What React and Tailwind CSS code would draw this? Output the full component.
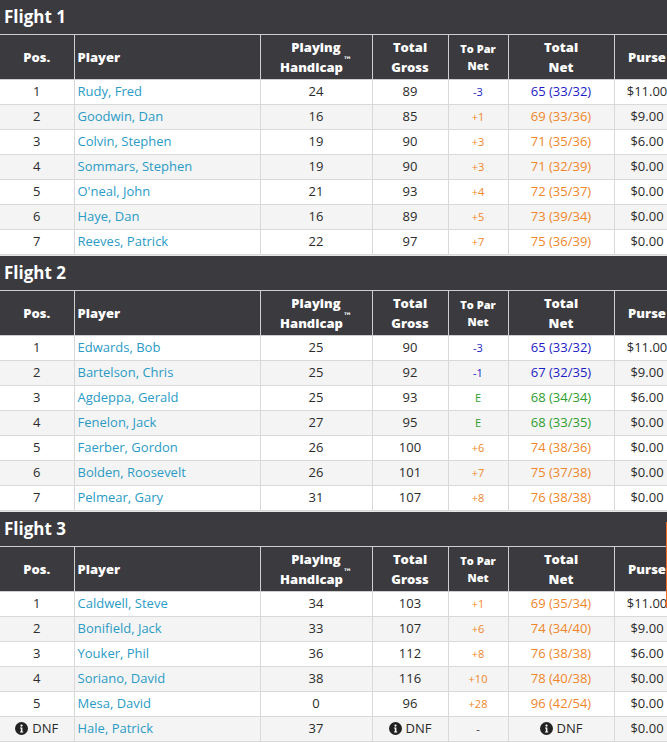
import React from 'react';

const flights = [
  {
    name: 'Flight 1',
    rows: [
      { pos: '1', player: 'Rudy, Fred', hcp: 24, gross: 89, par: '-3', net: '65 (33/32)', purse: '$11.00' },
      { pos: '2', player: 'Goodwin, Dan', hcp: 16, gross: 85, par: '+1', net: '69 (33/36)', purse: '$9.00' },
      { pos: '3', player: 'Colvin, Stephen', hcp: 19, gross: 90, par: '+3', net: '71 (35/36)', purse: '$6.00' },
      { pos: '4', player: 'Sommars, Stephen', hcp: 19, gross: 90, par: '+3', net: '71 (32/39)', purse: '$0.00' },
      { pos: '5', player: "O'neal, John", hcp: 21, gross: 93, par: '+4', net: '72 (35/37)', purse: '$0.00' },
      { pos: '6', player: 'Haye, Dan', hcp: 16, gross: 89, par: '+5', net: '73 (39/34)', purse: '$0.00' },
      { pos: '7', player: 'Reeves, Patrick', hcp: 22, gross: 97, par: '+7', net: '75 (36/39)', purse: '$0.00' },
    ],
  },
  {
    name: 'Flight 2',
    rows: [
      { pos: '1', player: 'Edwards, Bob', hcp: 25, gross: 90, par: '-3', net: '65 (33/32)', purse: '$11.00' },
      { pos: '2', player: 'Bartelson, Chris', hcp: 25, gross: 92, par: '-1', net: '67 (32/35)', purse: '$9.00' },
      { pos: '3', player: 'Agdeppa, Gerald', hcp: 25, gross: 93, par: 'E', net: '68 (34/34)', purse: '$6.00' },
      { pos: '4', player: 'Fenelon, Jack', hcp: 27, gross: 95, par: 'E', net: '68 (33/35)', purse: '$0.00' },
      { pos: '5', player: 'Faerber, Gordon', hcp: 26, gross: 100, par: '+6', net: '74 (38/36)', purse: '$0.00' },
      { pos: '6', player: 'Bolden, Roosevelt', hcp: 26, gross: 101, par: '+7', net: '75 (37/38)', purse: '$0.00' },
      { pos: '7', player: 'Pelmear, Gary', hcp: 31, gross: 107, par: '+8', net: '76 (38/38)', purse: '$0.00' },
    ],
  },
  {
    name: 'Flight 3',
    rows: [
      { pos: '1', player: 'Caldwell, Steve', hcp: 34, gross: 103, par: '+1', net: '69 (35/34)', purse: '$11.00' },
      { pos: '2', player: 'Bonifield, Jack', hcp: 33, gross: 107, par: '+6', net: '74 (34/40)', purse: '$9.00' },
      { pos: '3', player: 'Youker, Phil', hcp: 36, gross: 112, par: '+8', net: '76 (38/38)', purse: '$6.00' },
      { pos: '4', player: 'Soriano, David', hcp: 38, gross: 116, par: '+10', net: '78 (40/38)', purse: '$0.00' },
      { pos: '5', player: 'Mesa, David', hcp: 0, gross: 96, par: '+28', net: '96 (42/54)', purse: '$0.00' },
      { pos: 'DNF', player: 'Hale, Patrick', hcp: 37, gross: 'DNF', par: '-', net: 'DNF', purse: '$0.00' },
    ],
  },
];

const InfoDot = () => (
  <svg width="13" height="13" viewBox="0 0 16 16" className="inline-block align-[-2px] mr-1">
    <circle cx="8" cy="8" r="8" fill="#222" />
    <circle cx="8" cy="4.4" r="1.4" fill="#fff" />
    <path d="M6.2 6.8h2.9v4.9h1v1.3H6.2v-1.3h1v-3.6h-1z" fill="#fff" />
  </svg>
);

const scoreColor = (par) => {
  if (par === 'E') return 'text-[#2e9e2e]';
  if (par.startsWith('-') && par.length > 1) return 'text-[#1c1cc4]';
  if (par.startsWith('+')) return 'text-[#f0862a]';
  return 'text-[#333]';
};

const cell = 'border border-[#d9d9d9] h-[25px] p-0 text-center';
const head = 'border border-[#cfcfcf] p-0 text-center font-extrabold text-white';

const FlightTable = ({ flight }) => (
  <div className="mb-px">
    <div className="h-[34px] bg-[#3b3a3f] text-white font-bold text-[17px] leading-[34px] pl-1">
      {flight.name}
    </div>
    <table className="table-fixed border-collapse w-[680px] text-[13px] text-[#2b2b2b]">
      <colgroup>
        <col className="w-[74px]" />
        <col className="w-[186px]" />
        <col className="w-[112px]" />
        <col className="w-[76px]" />
        <col className="w-[60px]" />
        <col className="w-[106px]" />
        <col className="w-[66px]" />
      </colgroup>
      <thead>
        <tr className="bg-[#3b3a3f] h-[45px] leading-[20px]">
          <th className={`${head} border-l-0`}>Pos.</th>
          <th className={`${head} text-left pl-[3px]`}>Player</th>
          <th className={head}>
            Playing<br />Handicap
            <sup
              className="text-[9px] align-[5px] font-bold"
              style={{ fontFamily: '"DejaVu Sans", sans-serif' }}
            >
              ™
            </sup>
          </th>
          <th className={head}>Total<br />Gross</th>
          <th className={`${head} text-[11px] leading-[17px]`}>To Par<br />Net</th>
          <th className={head}>Total<br />Net</th>
          <th className={head}>Purse</th>
        </tr>
      </thead>
      <tbody>
        {flight.rows.map((r, i) => (
          <tr key={r.player} className={i % 2 === 0 ? 'bg-white' : 'bg-[#f4f4f4]'}>
            <td className={`${cell} border-l-0`}>
              {r.pos === 'DNF' ? <><InfoDot />DNF</> : r.pos}
            </td>
            <td className={`${cell} text-left pl-[3px] text-[#2a9bc6]`}>{r.player}</td>
            <td className={cell}>{r.hcp}</td>
            <td className={cell}>{r.gross === 'DNF' ? <><InfoDot />DNF</> : r.gross}</td>
            <td className={`${cell} text-[11px] ${scoreColor(r.par)}`}>{r.par}</td>
            <td className={`${cell} ${r.net === 'DNF' ? 'text-[#2b2b2b]' : scoreColor(r.par)}`}>
              {r.net === 'DNF' ? <><InfoDot />DNF</> : r.net}
            </td>
            <td className={cell}>{r.purse}</td>
          </tr>
        ))}
      </tbody>
    </table>
  </div>
);

export default function App() {
  return (
    <div
      className="relative w-[667px] h-[742px] overflow-hidden bg-[#e6e6e6]"
      style={{ fontFamily: '"Open Sans", "Liberation Sans", sans-serif' }}
    >
      {flights.map((f) => (
        <FlightTable key={f.name} flight={f} />
      ))}
      <div className="absolute right-0 top-[522px] h-[86px] w-px bg-[#f0692a]" />
    </div>
  );
}
